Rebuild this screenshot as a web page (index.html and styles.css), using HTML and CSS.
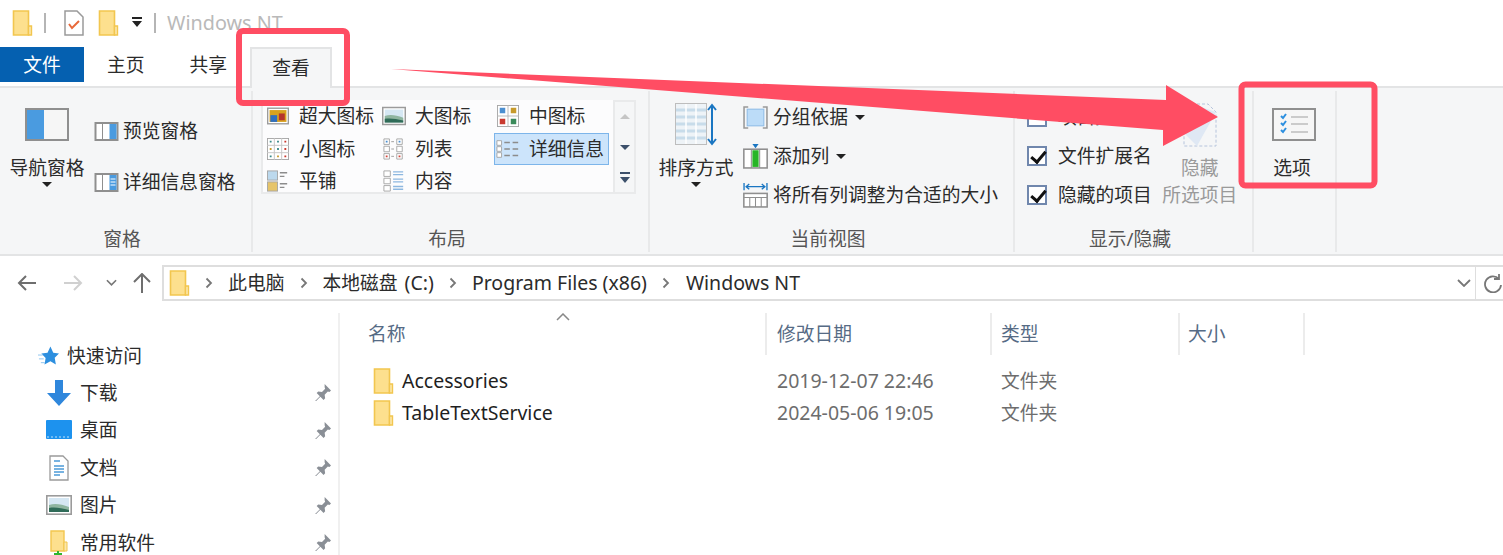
FILE: index.html
```html
<!DOCTYPE html>
<html>
<head>
    <title>Windows NT</title>
    <link rel="stylesheet" href="styles.css">
</head>
<body>
    <svg class="defs" width="0" height="0">
        <symbol id="folder" viewBox="0 0 20 26">
            <path d="M1 1h15v24H1z" fill="#fde08e" stroke="#f2c64f" stroke-width="1.6"/>
            <path d="M16 16h3v9h-3z" fill="#fbe7ab" stroke="#f2c64f" stroke-width="1.4"/>
        </symbol>
        <symbol id="pin" viewBox="1 1 16 16">
            <path d="M11 1l6 6-1.500 1.500-1.500-.5-3 3 .5 3.500-1.500 1.500-3-3-5 5-.5-.5 5-5-3-3 1.500-1.500 3.500.5 3-3-.5-1.500z" fill="#8a8f96"/>
        </symbol>
        <symbol id="chev" viewBox="0 0 8 12">
            <path d="M1.500 1.500L6 6l-4.500 4.500" fill="none" stroke="#777" stroke-width="1.800"/>
        </symbol>
        <symbol id="tinygrid" viewBox="0 0 24 24">
            <rect x=".5" y=".5" width="23" height="23" fill="#fff" stroke="#a5a5a5"/>
            <path d="M8 0v24M16 0v24M0 8h24M0 16h24" stroke="#c4c4c4"/>
            <path d="M3 3h2v2H3zM11 3h2v2h-2zM11 11h2v2h-2zM3 19h2v2H3z" fill="#3a8a8a"/>
            <path d="M19 3h2v2h-2zM19 11h2v2h-2zM19 19h2v2h-2z" fill="#c9392f"/>
            <path d="M3 11h2v2H3zM11 19h2v2h-2z" fill="#c79a2b"/>
        </symbol>
        <symbol id="listicon" viewBox="0 0 24 24">
            <path d="M1 1h6v6H1zM1 9h6v6H1zM1 17h6v6H1zM15 1h6v6h-6zM15 9h6v6h-6zM15 17h6v6h-6z" fill="#fff" stroke="#a5a5a5"/>
            <path d="M3 3h2v2H3zM17 3h2v2h-2z" fill="#4c8fd0"/>
            <path d="M3 19h2v2H3zM17 19h2v2h-2z" fill="#d4473c"/>
            <path d="M9 4h3M9 12h3M9 20h3" stroke="#999"/>
        </symbol>
        <symbol id="photo" viewBox="0 0 26 20">
            <rect x=".8" y=".8" width="24.400" height="18.400" fill="#fff" stroke="#9b9b9b" stroke-width="1.600"/>
            <rect x="3" y="3" width="20" height="14" fill="#d5e7f3"/>
            <path d="M3 10c6-2 12-1 20 2v5H3z" fill="#8fb5a0"/>
            <path d="M3 13c6-1 12 0 20 2v2H3z" fill="#2f6b58"/>
        </symbol>
    </svg>

    <header class="titlebar">
        <svg class="icon-folder"><use href="#folder"/></svg>
        <span class="title-sep"></span>
        <svg class="doc-check" viewBox="0 0 20 26">
            <path d="M1 1h12l6 6v18H1z" fill="#fff" stroke="#9a9a9a" stroke-width="1.500"/>
            <path d="M5 14l3 4 7-7" fill="none" stroke="#e8693a" stroke-width="2"/>
        </svg>
        <svg class="icon-folder"><use href="#folder"/></svg>
        <svg class="qat-drop" viewBox="0 0 12 12"><path d="M1 0h10v2H1zM1 4h10L6 10z" fill="#222"/></svg>
        <span class="title-sep"></span>
        <span class="title-text">Windows NT</span>
    </header>

    <nav class="tabs">
        <a class="tab tab-file">文件</a>
        <a class="tab tab-home">主页</a>
        <a class="tab tab-share">共享</a>
        <a class="tab tab-view">查看</a>
    </nav>

    <section class="ribbon">
        <div class="group group-pane">
            <div class="group-body">
                <div class="big-btn nav-btn">
                    <svg class="pane-icon" viewBox="0 0 44 33">
                        <rect x="1" y="1" width="42" height="31" fill="#f6f6f6" stroke="#8f8f8f" stroke-width="2"/>
                        <rect x="2" y="2" width="17" height="29" fill="#4a9be0"/>
                    </svg>
                    <span>导航窗格</span>
                    <i class="caret"></i>
                </div>
                <div class="pane-list">
                    <div class="small-btn">
                        <svg class="pane-small" viewBox="0 0 24 19">
                            <rect x="1" y="1" width="22" height="17" fill="#fff" stroke="#8f8f8f" stroke-width="2"/>
                            <path d="M8 1v17" stroke="#8f8f8f"/>
                            <rect x="15" y="2" width="7" height="15" fill="#4a9be0"/>
                        </svg>
                        预览窗格
                    </div>
                    <div class="small-btn">
                        <svg class="pane-small" viewBox="0 0 24 19">
                            <rect x="1" y="1" width="22" height="17" fill="#fff" stroke="#8f8f8f" stroke-width="2"/>
                            <path d="M8 1v17" stroke="#8f8f8f"/>
                            <rect x="15" y="2" width="7" height="15" fill="#4a9be0"/>
                            <path d="M16 6h5M16 9h5M16 12h5" stroke="#fff"/>
                        </svg>
                        详细信息窗格
                    </div>
                </div>
            </div>
            <div class="group-label">窗格</div>
        </div>

        <div class="group group-layout">
            <div class="group-body">
                <div class="gallery">
                    <div class="gallery-grid">
                        <div class="gallery-item"><svg class="g-icon" viewBox="-1 -3 28 26"><rect x=".8" y=".8" width="24.400" height="18.400" fill="#fff" stroke="#9b9b9b" stroke-width="1.600"/><rect x="3" y="3" width="20" height="14" fill="#d8a21f"/><rect x="4" y="9" width="8" height="8" fill="#2f6fc0"/><rect x="14" y="7" width="7" height="8" fill="#b5342c"/></svg>超大图标</div>
                        <div class="gallery-item"><svg class="g-icon"><use href="#photo"/></svg>大图标</div>
                        <div class="gallery-item"><svg class="g-icon" viewBox="0 0 24 24"><rect x=".5" y=".5" width="23" height="23" fill="#fff" stroke="#a5a5a5"/><path d="M12 0v24M0 12h24" stroke="#b5b5b5"/><path d="M3 3h6v6H3z" fill="#4c8fd0"/><path d="M15 3h6v6h-6z" fill="#c79a2b"/><path d="M3 15h6v6H3z" fill="#c9392f"/><path d="M15 15h6v6h-6z" fill="#3a8a5a"/></svg>中图标</div>
                        <div class="gallery-item"><svg class="g-icon"><use href="#tinygrid"/></svg>小图标</div>
                        <div class="gallery-item"><svg class="g-icon"><use href="#listicon"/></svg>列表</div>
                        <div class="gallery-item is-selected"><svg class="g-icon" viewBox="0 0 26 20"><path d="M1 1h5v5H1zM1 7.500h5v5H1zM1 14h5v5H1z" fill="#fff" stroke="#a5a5a5"/><path d="M9 3h6M18 3h6M9 10h6M18 10h6M9 17h6M18 17h6" stroke="#8c8c8c" stroke-width="1.500"/></svg>详细信息</div>
                        <div class="gallery-item"><svg class="g-icon" viewBox="0 0 24 24"><rect x=".5" y="1" width="11" height="10" fill="#bcd9ee" stroke="#a5a5a5"/><rect x=".5" y="13" width="11" height="10" fill="#e6c46a" stroke="#a5a5a5"/><path d="M14 3h8M14 7h5M14 15h8M14 19h5" stroke="#8c8c8c" stroke-width="1.500"/></svg>平铺</div>
                        <div class="gallery-item"><svg class="g-icon" viewBox="0 0 24 24"><path d="M1 1h7v6H1zM1 9h7v6H1zM1 17h7v6H1z" fill="#fff" stroke="#a5a5a5"/><path d="M11 2h11M11 5h11M11 10h11M11 13h11M11 18h11M11 21h11" stroke="#8db7e0" stroke-width="1.500"/></svg>内容</div>
                    </div>
                    <div class="gallery-scroll">
                        <i class="scroll-up"></i>
                        <i class="scroll-down"></i>
                        <i class="scroll-more"></i>
                    </div>
                </div>
            </div>
            <div class="group-label">布局</div>
        </div>

        <div class="group group-view">
            <div class="group-body">
                <div class="big-btn sort-btn">
                    <svg class="sort-icon" viewBox="0 0 42 43">
                        <rect x=".5" y=".5" width="31" height="41" fill="#eef3f7" stroke="#bdbdbd"/>
                        <path d="M1 7h30M1 14h30M1 21h30M1 28h30M1 35h30" stroke="#c8dcea" stroke-width="3"/>
                        <path d="M11 1v40M21 1v40" stroke="#fff" stroke-width="1.500"/>
                        <path d="M37 3v37M33 7l4-5 4 5M33 36l4 5 4-5" fill="none" stroke="#1a76c2" stroke-width="2"/>
                    </svg>
                    <span>排序方式</span>
                    <i class="caret"></i>
                </div>
                <div class="view-list">
                    <div class="small-btn">
                        <svg class="view-icon" viewBox="0 0 24 24"><path d="M5 2H1v20h4M19 2h4v20h-4" fill="none" stroke="#999" stroke-width="1.500"/><rect x="4" y="4" width="16" height="16" fill="#bcdcf8" stroke="#8fbce6"/></svg>
                        分组依据 <i class="caret inline"></i>
                    </div>
                    <div class="small-btn">
                        <svg class="view-icon" viewBox="0 0 24 24"><rect x=".8" y="5" width="22.400" height="18" fill="#fff" stroke="#8f8f8f" stroke-width="1.500"/><path d="M8 5v18M16 5v18" stroke="#8f8f8f"/><rect x="9" y="6" width="6" height="16" fill="#26b526"/><path d="M9 0h6l-3 4z" fill="#1a76c2"/></svg>
                        添加列 <i class="caret inline"></i>
                    </div>
                    <div class="small-btn">
                        <svg class="view-icon" viewBox="0 0 24 24"><path d="M1 0v7M23 0v7M3 3.500h18M6 1L3 3.500 6 6M18 1l3 2.500L18 6" fill="none" stroke="#1a76c2" stroke-width="1.300"/><rect x=".8" y="10" width="22.400" height="13" fill="#fff" stroke="#8f8f8f" stroke-width="1.500"/><path d="M1 14h22M6.500 14v9M12 14v9M17.500 14v9" stroke="#8f8f8f"/></svg>
                        将所有列调整为合适的大小
                    </div>
                </div>
            </div>
            <div class="group-label">当前视图</div>
        </div>

        <div class="group group-show">
            <div class="group-body">
                <div class="check-list">
                    <div class="check-row"><i class="check"></i>项目复选框</div>
                    <div class="check-row"><i class="check is-on"></i>文件扩展名</div>
                    <div class="check-row"><i class="check is-on"></i>隐藏的项目</div>
                </div>
                <div class="big-btn hide-btn">
                    <svg class="hide-icon" viewBox="0 0 34 44">
                        <path d="M9 1h16l8 8v34H1V30" fill="none" stroke="#b6c4dc" stroke-dasharray="3 2"/>
                        <path d="M1 4l8-3 24 8L14 43 1 30z" fill="#dfe8f4"/>
                    </svg>
                    <span>隐藏</span>
                    <span>所选项目</span>
                </div>
            </div>
            <div class="group-label">显示/隐藏</div>
        </div>

        <div class="group group-options">
            <div class="group-body">
                <div class="big-btn options-btn">
                    <svg class="pane-icon" viewBox="0 0 44 33">
                        <rect x="1" y="1" width="42" height="31" fill="#f6f6f6" stroke="#8f8f8f" stroke-width="2"/>
                        <path d="M9 8l2 2 3-4M9 15l2 2 3-4M9 22l2 2 3-4" fill="none" stroke="#2d8fdf" stroke-width="2"/>
                        <path d="M19 9h17M19 16h17M19 24h17" stroke="#bdbdbd" stroke-width="1.500"/>
                    </svg>
                    <span>选项</span>
                </div>
            </div>
        </div>
    </section>

    <section class="addressrow">
        <div class="nav-arrows">
            <svg class="nav-arrow" viewBox="0 0 20 18"><path d="M19 9H2M9 2L2 9l7 7" fill="none" stroke="#6e6e6e" stroke-width="2"/></svg>
            <svg class="nav-arrow" viewBox="0 0 20 18"><path d="M1 9h17M11 2l7 7-7 7" fill="none" stroke="#d0d0d0" stroke-width="2"/></svg>
            <svg class="nav-drop" viewBox="0 0 12 8"><path d="M1 1l5 5 5-5" fill="none" stroke="#777" stroke-width="1.800"/></svg>
            <svg class="nav-up" viewBox="0 0 18 20"><path d="M9 20V2M1 9l8-8 8 8" fill="none" stroke="#6e6e6e" stroke-width="2"/></svg>
        </div>
        <div class="addressbox">
            <svg class="icon-folder"><use href="#folder"/></svg>
            <svg class="crumb-sep"><use href="#chev"/></svg>
            <span>此电脑</span>
            <svg class="crumb-sep"><use href="#chev"/></svg>
            <span>本地磁盘<span class="latin drive"> (C:)</span></span>
            <svg class="crumb-sep"><use href="#chev"/></svg>
            <span class="latin">Program Files (x86)</span>
            <svg class="crumb-sep"><use href="#chev"/></svg>
            <span class="latin">Windows NT</span>
            <svg class="addr-drop" viewBox="0 0 14 8"><path d="M1 1l6 6 6-6" fill="none" stroke="#777" stroke-width="1.800"/></svg>
        </div>
        <div class="refresh">
            <svg class="refresh-icon" viewBox="0 0 20 20"><path d="M16 6a8 8 0 1 0 2 6M16 1v5h-5" fill="none" stroke="#777" stroke-width="1.800"/></svg>
        </div>
    </section>

    <main class="content">
        <aside class="sidebar">
            <div class="side-head">
                <svg class="star" viewBox="0 0 22 20"><path d="M13 0l3 6.500 6 .8-4.500 4.500 1.200 7L13 15.500 6.800 19 8 12 3.500 7.300 10 6.500z" fill="#2d8fdf"/><path d="M0 9h5M1 13h5M3 17h4" stroke="#8cc4ef"/></svg>
                快速访问
            </div>
            <div class="side-item">
                <svg class="side-icon" viewBox="0 0 26 26"><path d="M9 0h8v13h8L13 26 1 13h8z" fill="#2f87dc"/></svg>
                <span>下载</span>
                <svg class="pin"><use href="#pin"/></svg>
            </div>
            <div class="side-item">
                <svg class="side-icon" viewBox="0 0 26 20"><rect width="26" height="19" rx="1" fill="#1d92ee"/><path d="M1 17h24" stroke="#bfe3fb" stroke-dasharray="2 2"/></svg>
                <span>桌面</span>
                <svg class="pin"><use href="#pin"/></svg>
            </div>
            <div class="side-item">
                <svg class="side-icon" viewBox="0 0 26 26"><path d="M4 1h13l5 5v19H4z" fill="#fff" stroke="#9a9a9a" stroke-width="1.300"/><path d="M8 6h6M8 11h10M8 14h10M8 17h10M8 20h6" stroke="#4c9ad8" stroke-width="1.500"/></svg>
                <span>文档</span>
                <svg class="pin"><use href="#pin"/></svg>
            </div>
            <div class="side-item">
                <svg class="side-icon"><use href="#photo"/></svg>
                <span>图片</span>
                <svg class="pin"><use href="#pin"/></svg>
            </div>
            <div class="side-item">
                <svg class="side-icon" viewBox="0 0 26 26"><path d="M5 1h13v20H5z" fill="#fde08e" stroke="#f2c64f" stroke-width="1.400"/><path d="M18 12h3v9h-3z" fill="#fbe7ab" stroke="#f2c64f"/><path d="M12 21v5M8 24h8" stroke="#2fb52f" stroke-width="2"/></svg>
                <span>常用软件</span>
                <svg class="pin"><use href="#pin"/></svg>
            </div>
        </aside>

        <div class="files">
            <div class="file-head">
                <div class="col col-name">名称<svg class="sort-caret" viewBox="0 0 14 8"><path d="M1 7l6-6 6 6" fill="none" stroke="#888" stroke-width="1.500"/></svg></div>
                <div class="col col-date">修改日期</div>
                <div class="col col-type">类型</div>
                <div class="col col-size">大小</div>
            </div>
            <div class="file-row">
                <div class="cell-name"><svg class="icon-folder row-folder"><use href="#folder"/></svg><span class="latin">Accessories</span></div>
                <div class="cell-date latin">2019-12-07 22:46</div>
                <div class="cell-type">文件夹</div>
            </div>
            <div class="file-row">
                <div class="cell-name"><svg class="icon-folder row-folder"><use href="#folder"/></svg><span class="latin">TableTextService</span></div>
                <div class="cell-date latin">2024-05-06 19:05</div>
                <div class="cell-type">文件夹</div>
            </div>
        </div>
    </main>

    <svg class="annotations" viewBox="0 0 1503 555">
        <rect class="mark" x="239" y="31" width="108" height="72" rx="4"/>
        <rect class="mark" x="1241.500" y="84.500" width="133" height="101" rx="4"/>
        <path class="arrow" d="M391 69L1166 100L1166 85L1218 117L1163 146L1163 130Z"/>
    </svg>
</body>
</html>
```

FILE: styles.css
```css
* {
    box-sizing: border-box;
}

html, body {
    margin: 0;
    height: 555px;
    overflow: hidden;
}

body {
    position: relative;
    background-color: #fff;
    color: #2b2b2b;
    font-family: "Noto Sans", "Noto Sans CJK SC", sans-serif;
    font-size: 18.750px;
    line-height: 26px;
}

.defs {
    display: block;
    height: 0;
}

.latin {
    font-size: 19.500px;
}

.icon-folder {
    width: 21px;
    height: 26px;
    flex: none;
}

/* title bar */
.titlebar {
    display: flex;
    align-items: center;
    height: 47px;
    padding-left: 12px;
    padding-bottom: 2px;
}

.title-sep {
    width: 2px;
    height: 20px;
    margin: 0 11px 0 11px;
    background-color: #b5b5b5;
}

.doc-check {
    width: 20px;
    height: 26px;
    margin: 0 14px 0 7px;
}

.qat-drop {
    width: 12px;
    height: 12px;
    margin-left: 12px;
}

.title-text {
    color: #b9b9b9;
    font-size: 19.800px;
}

/* tabs */
.tabs {
    display: flex;
    height: 41px;
    border-bottom: 2px solid #e3e4e5;
}

.tab {
    display: block;
    height: 35px;
    line-height: 36px;
    text-align: center;
}

.tab-file {
    width: 84px;
    background-color: #0560b0;
    color: #fff;
}

.tab-home {
    margin-left: 23px;
}

.tab-share {
    margin-left: 45px;
}

.tab-view {
    width: 82px;
    height: 41px;
    line-height: 37px;
    margin-left: 23px;
    background-color: #f5f6f7;
    border: 2px solid #e3e4e5;
    border-bottom: none;
}

/* ribbon */
.ribbon {
    display: flex;
    height: 168px;
    background-color: #f5f6f7;
    border-bottom: 2px solid #e3e4e5;
    padding-top: 3px;
}

.group {
    display: flex;
    flex-direction: column;
    height: 161px;
    border-right: 2px solid #e8e9ea;
}

.group-body {
    display: flex;
    height: 135px;
}

.group-label {
    padding-right: 7px;
    text-align: center;
    color: #555;
}

.group-pane { width: 253px; }
.group-layout { width: 397px; }
.group-view { width: 365px; }
.group-show { width: 239px; }
.group-options { width: 83px; }

.big-btn {
    display: flex;
    flex-direction: column;
    align-items: center;
}

.caret {
    display: block;
    width: 0;
    height: 0;
    border-left: 5px solid transparent;
    border-right: 5px solid transparent;
    border-top: 5px solid #222;
}

.caret.inline {
    display: inline-block;
    margin-left: 7px;
    vertical-align: middle;
}

.small-btn {
    display: flex;
    align-items: center;
    white-space: nowrap;
}

.pane-icon {
    width: 44px;
    height: 33px;
    margin-top: 17px;
    margin-bottom: 14px;
}

.nav-btn {
    width: 76px;
    margin-left: 9px;
}

.nav-btn span,
.sort-btn span {
    line-height: 26px;
}

.nav-btn .caret,
.sort-btn .caret {
    margin-top: 1px;
}

.pane-list {
    display: flex;
    flex-direction: column;
    gap: 25px;
    margin-left: 9px;
    padding-top: 27px;
}

.pane-small {
    width: 25px;
    height: 19px;
    margin-right: 4px;
}

/* layout gallery */
.gallery {
    display: flex;
    width: 375px;
    height: 94px;
    margin: 9px 0 0 8px;
    background-color: #fff;
    border: 2px solid #e9eaeb;
}

.gallery-grid {
    display: grid;
    grid-template-columns: 116px 114px 115px;
    grid-template-rows: repeat(3, 32.500px);
    width: 350px;
    margin-top: -2px;
    padding-left: 3px;
    background-color: #fcfcfd;
}

.gallery-item {
    display: flex;
    align-items: center;
    white-space: nowrap;
}

.gallery-item.is-selected {
    margin-left: -2px;
    margin-right: 2px;
    padding-left: 1px;
    background-color: #cce4fb;
    border: 1px solid #7db5ea;
}

.g-icon {
    width: 24px;
    height: 22px;
    margin-right: 9px;
    flex: none;
}

.gallery-scroll {
    display: flex;
    flex-direction: column;
    align-items: center;
    width: 21px;
    border-left: 2px solid #e9eaeb;
    background-color: #f5f6f7;
    padding-top: 12px;
}

.scroll-up,
.scroll-down {
    display: block;
    width: 0;
    height: 0;
    border-left: 5px solid transparent;
    border-right: 5px solid transparent;
}

.scroll-up {
    border-bottom: 5px solid #c5c5c5;
}

.scroll-down {
    margin-top: 26px;
    border-top: 5px solid #3c506b;
}

.scroll-more {
    display: block;
    width: 10px;
    height: 11px;
    margin-top: 22px;
    border-top: 2px solid #3c506b;
    position: relative;
}

.scroll-more::after {
    content: "";
    position: absolute;
    top: 3px;
    left: 0;
    border-left: 5px solid transparent;
    border-right: 5px solid transparent;
    border-top: 6px solid #3c506b;
}

/* current view */
.sort-btn {
    width: 76px;
    margin-left: 8px;
}

.sort-icon {
    width: 42px;
    height: 43px;
    margin-top: 12px;
    margin-bottom: 9px;
}

.view-list {
    display: flex;
    flex-direction: column;
    gap: 13px;
    margin-left: 9px;
    padding-top: 13px;
}

.view-icon {
    width: 25px;
    height: 25px;
    margin-right: 5px;
    flex: none;
}

/* show / hide */
.check-list {
    display: flex;
    flex-direction: column;
    gap: 13px;
    margin-left: 12px;
    padding-top: 13px;
}

.check-row {
    display: flex;
    align-items: center;
    white-space: nowrap;
}

.check {
    position: relative;
    width: 20px;
    height: 20px;
    margin-right: 11px;
    background-color: #fff;
    border: 2px solid #7087ad;
}

.check.is-on::after {
    content: "";
    position: absolute;
    left: 5px;
    top: 0;
    width: 6px;
    height: 12px;
    border-right: 3px solid #111;
    border-bottom: 3px solid #111;
    transform: rotate(40deg);
}

.hide-btn {
    width: 76px;
    margin-left: 10px;
    color: #9a9a9a;
}

.hide-icon {
    width: 34px;
    height: 44px;
    margin-top: 12px;
    margin-bottom: 8px;
}

.hide-btn span + span {
    margin-top: 1px;
    white-space: nowrap;
}

.options-btn {
    width: 76px;
    color: #2b2b2b;
}

.options-btn .pane-icon {
    margin-left: 3px;
}

/* address row */
.addressrow {
    display: flex;
    align-items: center;
    height: 45px;
    padding-top: 9px;
}

.nav-arrows {
    display: flex;
    align-items: center;
    width: 163px;
    padding-left: 17px;
}

.nav-arrow {
    width: 20px;
    height: 18px;
    margin-right: 26px;
}

.nav-drop {
    width: 11px;
    height: 8px;
    margin-left: -3px;
    margin-right: 16px;
}

.nav-up {
    width: 18px;
    height: 20px;
}

.addressbox {
    display: flex;
    align-items: center;
    width: 1320px;
    height: 36px;
    padding-left: 5px;
    border: 2px solid #dedede;
    border-right: 1px solid #dedede;
}

.crumb-sep {
    width: 8px;
    height: 12px;
    margin: 0 15px 0 15px;
}

.drive {
    padding-left: 2px;
}

.addressbox .latin + .crumb-sep {
    margin-right: 16px;
}

.addr-drop {
    width: 14px;
    height: 8px;
    margin-left: auto;
    margin-right: 4px;
}

.refresh {
    display: flex;
    flex: 1;
    align-items: center;
    height: 36px;
    padding-left: 7px;
    border-top: 2px solid #dedede;
    border-bottom: 2px solid #dedede;
}

.refresh-icon {
    width: 20px;
    height: 20px;
    flex: none;
}

/* main area */
.content {
    display: flex;
    padding-top: 12px;
}

.sidebar {
    width: 340px;
    height: 245px;
    padding-top: 30px;
    border-right: 2px solid #f0f0f0;
}

.side-head {
    display: flex;
    align-items: center;
    height: 26px;
    padding-left: 38px;
}

.star {
    width: 21px;
    height: 20px;
    margin-right: 8px;
}

.side-item {
    display: flex;
    align-items: center;
    height: 37.500px;
    padding-left: 46px;
}

.side-head + .side-item {
    margin-top: 5px;
}

.side-icon {
    width: 26px;
    height: 26px;
    margin-right: 8px;
    flex: none;
}

.pin {
    width: 17px;
    height: 17px;
    margin-left: auto;
    margin-right: 7px;
}

.files {
    flex: 1;
}

.file-head {
    display: flex;
    height: 42px;
    padding-left: 28px;
    color: #566b85;
}

.col {
    position: relative;
    height: 42px;
    line-height: 42px;
    border-right: 2px solid #ececec;
}

.col-name { width: 399px; }
.col-date { width: 225px; padding-left: 10px; }
.col-type { width: 188px; padding-left: 9px; }
.col-size { width: 125px; padding-left: 8px; }

.sort-caret {
    position: absolute;
    top: 0;
    left: 188px;
    width: 14px;
    height: 8px;
}

.file-row {
    display: flex;
    height: 32px;
    align-items: center;
    padding-left: 33px;
}

.file-head + .file-row {
    margin-top: 10px;
}

.cell-name {
    display: flex;
    align-items: center;
    width: 404px;
    color: #1f1f1f;
}

.row-folder {
    margin-right: 8px;
}

.cell-date {
    width: 224px;
    color: #6d6d6d;
}

.cell-type {
    color: #6d6d6d;
}

/* red annotations drawn on top of the screenshot */
.annotations {
    position: absolute;
    top: 0;
    left: 0;
    width: 1503px;
    height: 555px;
    pointer-events: none;
}

.mark {
    fill: none;
    stroke: #ff4d63;
    stroke-width: 6;
}

.arrow {
    fill: #ff4d63;
}
```
